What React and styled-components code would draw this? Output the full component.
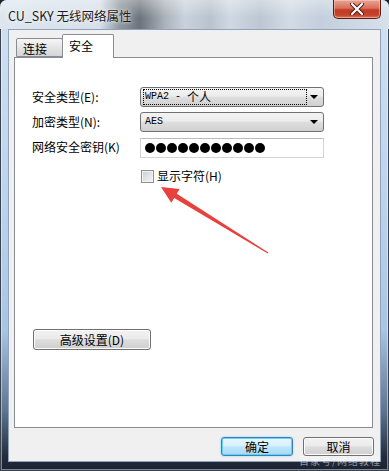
import React from "react";
import styled, { createGlobalStyle } from "styled-components";

const GlobalStyle = createGlobalStyle`
  html, body { margin: 0; padding: 0; background: #1c2230; }
  body { font-family: "Noto Sans CJK SC", "Noto Sans", sans-serif; }
  * { box-sizing: border-box; }
`;

const CJK = `"Noto Sans CJK SC", "Noto Sans", sans-serif`;

const Window = styled.div`
  position: relative;
  width: 389px;
  height: 471px;
  display: flex;
  flex-direction: column;
  overflow: hidden;
  border-radius: 7px 7px 0 0;
  background: linear-gradient(
    to bottom,
    #d3e1f0 0px,
    #bcd3ec 200px,
    #a9c4e4 330px,
    #5f7592 410px,
    #262e3e 455px,
    #1a2030 471px
  );
  box-shadow: inset 0 0 0 1px #39424f, inset 0 0 0 2px rgba(255, 255, 255, 0.45);
`;

const TitleBar = styled.div`
  height: 29px;
  flex: none;
  display: flex;
  justify-content: space-between;
  align-items: flex-start;
  padding-left: 8px;
  background:
    linear-gradient(to bottom, rgba(255,255,255,0.35), rgba(255,255,255,0) 60%),
    linear-gradient(
      to right,
      #dde6ef 0px,
      #d6e0ea 100px,
      #8d959e 120px,
      #6c737c 140px,
      #aab2bb 165px,
      #c9d2dc 185px,
      #b9c3ce 210px,
      #cfd8e2 230px,
      #bcc7d3 260px,
      #d2dbe5 290px,
      #c3cfdc 320px,
      #d6e1ec 389px
    );
`;

const Title = styled.div`
  margin-top: 8px;
  font-family: ${CJK};
  font-size: 12.5px;
  line-height: 16px;
  color: #1a1a1a;
  text-shadow: 0 0 6px rgba(255, 255, 255, 0.9), 0 0 2px rgba(255, 255, 255, 0.9);
`;

const CloseButton = styled.div`
  width: 48px;
  height: 19px;
  margin-right: 8px;
  display: flex;
  align-items: center;
  justify-content: center;
  border: 1px solid #5b1c12;
  border-top: none;
  border-radius: 0 0 5px 5px;
  background: linear-gradient(to bottom, #e9a594 0%, #d7705c 45%, #c23a23 55%, #c5452c 85%, #e07a5e 100%);
  box-shadow: inset 0 0 0 1px rgba(255, 220, 210, 0.45);
`;

const Client = styled.div`
  flex: 1;
  margin: 0 8px 9px 8px;
  display: flex;
  flex-direction: column;
  background: #f0f0f0;
  border: 1px solid #8fa3bb;
  padding: 4px 7px 0 5px;
`;

const TabsRow = styled.div`
  display: flex;
  align-items: flex-end;
  padding-left: 2px;
  height: 23px;
  position: relative;
  z-index: 1;
`;

const Tab = styled.div`
  width: ${(p) => (p.$active ? 52 : 47)}px;
  height: ${(p) => (p.$active ? 24 : 19)}px;
  margin-left: ${(p) => (p.$active ? -1 : 0)}px;
  margin-bottom: ${(p) => (p.$active ? -1 : 0)}px;
  border: 1px solid #898c95;
  border-bottom: ${(p) => (p.$active ? "none" : "1px solid #898c95")};
  border-radius: 2px 2px 0 0;
  background: ${(p) =>
    p.$active ? "#ffffff" : "linear-gradient(to bottom, #f6f6f6, #e4e4e4 50%, #d6d6d6)"};
  font-family: ${CJK};
  font-size: 12px;
  line-height: 16px;
  color: #000;
  padding-left: 6px;
  padding-top: ${(p) => (p.$active ? 3 : 2)}px;
`;

const Panel = styled.div`
  flex: 1;
  background: #ffffff;
  border: 1px solid #898c95;
  display: flex;
  flex-direction: column;
  padding: 29px 0 0 17px;
`;

const FormGrid = styled.div`
  display: grid;
  grid-template-columns: 108px 184px;
  grid-auto-rows: 20px;
  row-gap: 5px;
  align-items: center;
`;

const Label = styled.div`
  font-family: ${CJK};
  font-size: 12px;
  line-height: 16px;
  color: #000;
  white-space: nowrap;
`;

const Combo = styled.div`
  position: relative;
  height: 20px;
  display: flex;
  align-items: center;
  padding: 0 16px 0 2px;
  border: 1px solid #707070;
  border-radius: 3px;
  background: linear-gradient(to bottom, #f4f4f4 0%, #ececec 45%, #dedede 52%, #d0d0d0 100%);
`;

const ComboText = styled.div`
  flex: 1;
  height: 16px;
  display: flex;
  align-items: center;
  padding-left: 1px;
  border: 1px dotted ${(p) => (p.$focus ? "#000" : "transparent")};
  font-family: "Liberation Mono", ${CJK};
  font-size: 10px;
  line-height: 14px;
  color: #000;
  white-space: pre;
`;

const Wide = styled.span`
  font-family: ${CJK};
  font-size: 12px;
`;

const ComboArrow = styled.span`
  position: absolute;
  right: 5px;
  top: 7px;
  width: 0;
  height: 0;
  border-left: 4px solid transparent;
  border-right: 4px solid transparent;
  border-top: 4px solid #000;
`;

const KeyField = styled.div`
  height: 20px;
  margin-top: 1px;
  display: flex;
  align-items: center;
  gap: 1px;
  padding-left: 4px;
  border: 1px solid #d2d4d8;
  border-top-color: #b8bcc2;
  background: #fff;
`;

const Dot = styled.span`
  width: 10px;
  height: 10px;
  border-radius: 50%;
  background: #000;
`;

const CheckRow = styled.label`
  display: flex;
  align-items: center;
  gap: 3px;
  margin-top: 12px;
  margin-left: 109px;
  font-family: ${CJK};
  font-size: 12px;
  line-height: 14px;
  color: #000;
`;

const CheckBox = styled.span`
  width: 13px;
  height: 13px;
  border: 1px solid #8e8f8f;
  background: linear-gradient(135deg, #c9cbcf 0%, #e2e3e5 50%, #f6f6f6 100%);
  box-shadow: inset 0 0 0 1px #f2f2f2;
`;

const Button = styled.div`
  width: ${(p) => p.$w}px;
  height: ${(p) => p.$h || 19}px;
  display: flex;
  align-items: center;
  justify-content: center;
  border: 1px solid ${(p) => (p.$default ? "#3c7fb1" : "#707070")};
  border-radius: 3px;
  background: ${(p) =>
    p.$default
      ? "linear-gradient(to bottom, #eaf6fd 0%, #d9f0fc 45%, #bee6fd 52%, #a7d9f5 100%)"
      : "linear-gradient(to bottom, #f2f2f2 0%, #ebebeb 45%, #dddddd 52%, #cfcfcf 100%)"};
  box-shadow: ${(p) =>
    p.$default ? "inset 0 0 0 1px #5fd3fb, 0 0 2px #7fc4ef" : "inset 0 0 0 1px #fcfcfc"};
  font-family: ${CJK};
  font-size: 12px;
  line-height: 14px;
  color: #000;
`;

const AdvancedWrap = styled.div`
  margin-top: 146px;
  margin-left: 1px;
`;

const ButtonRow = styled.div`
  height: 33px;
  flex: none;
  display: flex;
  justify-content: flex-end;
  align-items: flex-start;
  gap: 10px;
  padding-top: 9px;
  margin-right: -1px;
`;

const Watermark = styled.div`
  position: absolute;
  right: 8px;
  bottom: 4px;
  font-family: ${CJK};
  font-size: 10px;
  line-height: 12px;
  color: rgba(255, 255, 255, 0.5);
  letter-spacing: 1px;
  pointer-events: none;
`;

const Annotation = styled.svg`
  position: absolute;
  left: 0;
  top: 0;
  pointer-events: none;
`;

export default function App() {
  return (
    <>
      <GlobalStyle />
      <Window>
        <TitleBar>
          <Title>CU_SKY 无线网络属性</Title>
          <CloseButton>
            <svg width="14" height="12" viewBox="0 0 14 12">
              <path
                d="M2 1 L12 11 M12 1 L2 11"
                stroke="#4a1a14"
                strokeWidth="4"
                strokeLinecap="round"
              />
              <path
                d="M2 1 L12 11 M12 1 L2 11"
                stroke="#ffffff"
                strokeWidth="2.2"
                strokeLinecap="round"
              />
            </svg>
          </CloseButton>
        </TitleBar>
        <Client>
          <TabsRow>
            <Tab>连接</Tab>
            <Tab $active>安全</Tab>
          </TabsRow>
          <Panel>
            <FormGrid>
              <Label>安全类型(E):</Label>
              <Combo>
                <ComboText $focus>
                  WPA2 - <Wide>个人</Wide>
                </ComboText>
                <ComboArrow />
              </Combo>
              <Label>加密类型(N):</Label>
              <Combo>
                <ComboText>AES</ComboText>
                <ComboArrow />
              </Combo>
              <Label>网络安全密钥(K)</Label>
              <KeyField>
                {Array.from({ length: 11 }).map((_, i) => (
                  <Dot key={i} />
                ))}
              </KeyField>
            </FormGrid>
            <CheckRow>
              <CheckBox />
              显示字符(H)
            </CheckRow>
            <AdvancedWrap>
              <Button $w={118} $h={21}>高级设置(D)</Button>
            </AdvancedWrap>
          </Panel>
          <ButtonRow>
            <Button $w={72} $default>确定</Button>
            <Button $w={71}>取消</Button>
          </ButtonRow>
        </Client>
        <Watermark>百家号/网络教程</Watermark>
        <Annotation width="389" height="471" viewBox="0 0 389 471">
          <polygon
            points="161,187 179.7,189.1 176.8,193.8 268.3,252.6 267.7,253.4 174.2,198.0 171.3,202.7"
            fill="#e8403c"
          />
        </Annotation>
      </Window>
    </>
  );
}
